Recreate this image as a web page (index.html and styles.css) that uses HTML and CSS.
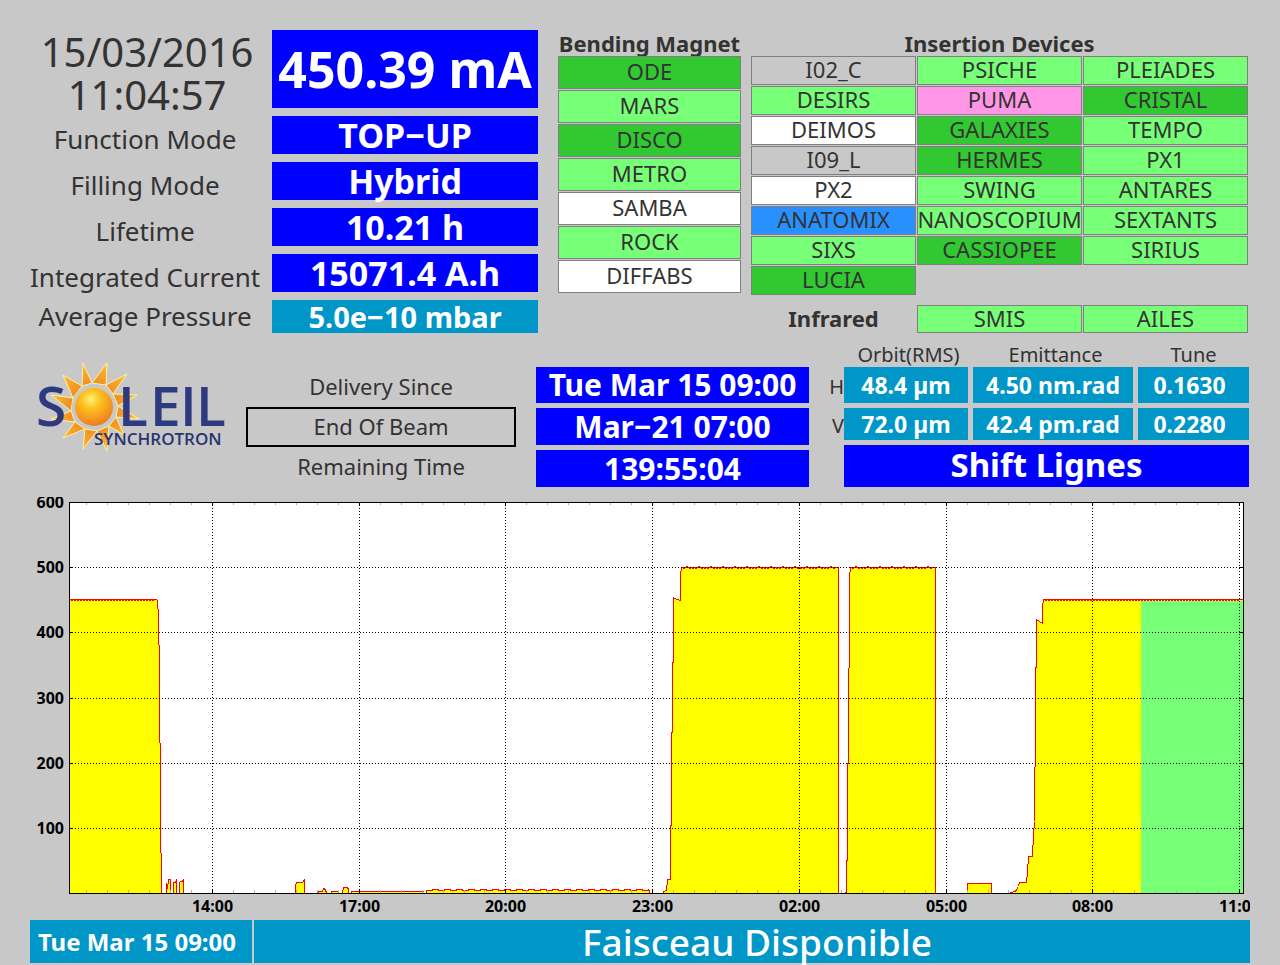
FILE: index.html
```html
<!DOCTYPE html>
<html lang="en">
<head>
    <meta charset="UTF-8">
    <meta name="viewport" content="width=device-width, initial-scale=1.0">
    <title>SOLEIL Machine Status</title>
    <link rel="stylesheet" href="styles.css">
</head>
<body>
<div class="top">
    <div class="machine">
        <div class="clock">15/03/2016<br>11:04:57</div>
        <div class="value current">450.39 mA</div>
        <div class="name">Function Mode</div>
        <div class="value">TOP−UP</div>
        <div class="name">Filling Mode</div>
        <div class="value">Hybrid</div>
        <div class="name">Lifetime</div>
        <div class="value">10.21 h</div>
        <div class="name">Integrated Current</div>
        <div class="value">15071.4 A.h</div>
        <div class="name pressure-name">Average Pressure</div>
        <div class="value pressure">5.0e−10 mbar</div>
    </div>

    <div class="bending">
        <h2>Bending Magnet</h2>
        <ul class="lines">
            <li class="dark">ODE</li>
            <li class="open">MARS</li>
            <li class="dark">DISCO</li>
            <li class="open">METRO</li>
            <li class="closed">SAMBA</li>
            <li class="open">ROCK</li>
            <li class="closed">DIFFABS</li>
        </ul>
    </div>

    <div class="insertion">
        <h2>Insertion Devices</h2>
        <ul class="lines three">
            <li>I02_C</li>
            <li class="open">PSICHE</li>
            <li class="open">PLEIADES</li>
            <li class="open">DESIRS</li>
            <li class="pink">PUMA</li>
            <li class="dark">CRISTAL</li>
            <li class="closed">DEIMOS</li>
            <li class="dark">GALAXIES</li>
            <li class="open">TEMPO</li>
            <li>I09_L</li>
            <li class="dark">HERMES</li>
            <li class="open">PX1</li>
            <li class="closed">PX2</li>
            <li class="open">SWING</li>
            <li class="open">ANTARES</li>
            <li class="blue">ANATOMIX</li>
            <li class="open">NANOSCOPIUM</li>
            <li class="open">SEXTANTS</li>
            <li class="open">SIXS</li>
            <li class="dark">CASSIOPEE</li>
            <li class="open">SIRIUS</li>
            <li class="dark">LUCIA</li>
        </ul>
        <div class="infrared">
            <h2>Infrared</h2>
            <ul class="lines two">
                <li class="open">SMIS</li>
                <li class="open">AILES</li>
            </ul>
        </div>
    </div>
</div>

<div class="middle">
    <svg class="logo" viewBox="0 0 196 96" role="img" aria-label="SOLEIL Synchrotron">
        <defs>
            <radialGradient id="sun" cx="42%" cy="30%" r="70%">
                <stop offset="0" stop-color="#fff27a"/>
                <stop offset="0.35" stop-color="#fdc21c"/>
                <stop offset="1" stop-color="#ee7d22"/>
            </radialGradient>
            <radialGradient id="ray" gradientUnits="userSpaceOnUse" cx="59" cy="49" r="46">
                <stop offset="0.45" stop-color="#f08a24"/>
                <stop offset="1" stop-color="#fcc030"/>
            </radialGradient>
        </defs>
        <g fill="url(#ray)" stroke="#fdf3a0" stroke-width="1">
            <path d="M47 28 48 5 57 25z"/>
            <path d="M57 25 72 5 71 27z"/>
            <path d="M71 27 92 16 78 36z"/>
            <path d="M78 36 102 37 83 48z"/>
            <path d="M83 48 104 61 81 59z"/>
            <path d="M81 59 89 77 74 68z"/>
            <path d="M74 68 72 93 62 73z"/>
            <path d="M62 73 48 91 50 71z"/>
            <path d="M50 71 28 80 40 64z"/>
            <path d="M40 64 16 61 36 53z"/>
            <path d="M36 53 16 37 38 40z"/>
            <path d="M38 40 28 17 47 28z"/>
        </g>
        <circle cx="59" cy="49" r="22" fill="#c8c8c8"/>
        <circle cx="59" cy="49" r="19" fill="url(#sun)"/>
        <text class="logo-name" x="1" y="68">S</text>
        <text class="logo-name" x="83 115 145 161" y="68">LEIL</text>
        <text class="logo-sub" x="59" y="87">SYNCHROTRON</text>
    </svg>

    <div class="delivery">
        <div>Delivery Since</div>
        <div class="boxed">End Of Beam</div>
        <div>Remaining Time</div>
    </div>

    <div class="times">
        <div class="value">Tue Mar 15 09:00</div>
        <div class="value">Mar−21 07:00</div>
        <div class="value">139:55:04</div>
    </div>

    <div class="beam">
        <table>
            <thead>
                <tr>
                    <td class="corner"></td>
                    <th scope="col" class="orbit">Orbit(RMS)</th>
                    <th scope="col" class="emittance">Emittance</th>
                    <th scope="col" class="tune">Tune</th>
                </tr>
            </thead>
            <tbody>
                <tr class="horizontal">
                    <th scope="row">H</th>
                    <td>48.4 µm</td>
                    <td>4.50 nm.rad</td>
                    <td>0.1630</td>
                </tr>
                <tr class="vertical">
                    <th scope="row">V</th>
                    <td>72.0 µm</td>
                    <td>42.4 pm.rad</td>
                    <td>0.2280</td>
                </tr>
            </tbody>
        </table>
        <div class="value shift">Shift Lignes</div>
    </div>
</div>

<svg class="chart" id="chart" viewBox="0 0 1220 423" role="img" aria-label="Beam current over the last 24 hours"></svg>

<div class="footer">
    <div class="message-date">Tue Mar 15 09:00</div>
    <div class="message">Faisceau Disponible</div>
</div>

<script src="chart.js"></script>
</body>
</html>
```

FILE: styles.css
```css
* {
    box-sizing: border-box;
    margin: 0;
    padding: 0;
}
body {
    font-family: "Noto Sans", "Open Sans", sans-serif;
    background-color: #c8c8c8;
    color: #333;
    padding: 30px 30px 2px;
}
ul {
    list-style: none;
}
h2 {
    font-size: 22px;
    font-weight: 700;
    line-height: 26px;
    text-align: center;
    white-space: nowrap;
}
.value {
    display: flex;
    align-items: center;
    justify-content: center;
    background-color: #0000ff;
    color: #fff;
    font-weight: 700;
    white-space: nowrap;
}
.top {
    display: grid;
    grid-template-columns: 518fr 183fr 497fr;
    column-gap: 10px;
    padding-right: 2px;
}

/* left block */
.machine {
    display: grid;
    grid-template-columns: 242fr 266fr;
    grid-template-rows: 78px repeat(4, 38px) 33px;
    row-gap: 8px;
    margin-right: 10px;
    font-size: 34px;
    line-height: 36px;
}
.clock {
    padding-right: 8px;
    font-size: 40px;
    line-height: 43px;
    text-align: center;
}
.current {
    font-size: 50px;
}
.name {
    padding: 5px 12px 0 0;
    font-size: 26px;
    text-align: center;
    white-space: nowrap;
}
.machine .pressure-name {
    padding-top: 0;
    line-height: 33px;
}
.pressure {
    background-color: #0096c8;
    font-size: 29px;
    line-height: 33px;
}

/* beamlines */
.lines {
    display: grid;
    grid-auto-rows: 33px;
    gap: 1px;
}
.lines li {
    display: flex;
    align-items: center;
    justify-content: center;
    border: 1px solid #808080;
    padding-bottom: 3px;
    font-size: 22px;
    line-height: 24px;
}
.lines.three {
    grid-template-columns: repeat(3, minmax(0, 1fr));
    grid-auto-rows: 29px;
}
.lines.two {
    grid-template-columns: repeat(2, 1fr);
    grid-auto-rows: 28px;
}
.lines .open {
    background-color: #78ff78;
}
.lines .dark {
    background-color: #32c832;
}
.lines .closed {
    background-color: #fff;
}
.lines .pink {
    background-color: #ff96e6;
}
.lines .blue {
    background-color: #2890ff;
}
.infrared {
    display: grid;
    grid-template-columns: 165fr 331fr;
    column-gap: 1px;
    margin-top: 10px;
}

/* middle band */
.middle {
    display: grid;
    grid-template-columns: 216fr 270fr 293fr 440fr;
    align-items: end;
    padding: 10px 1px 0 0;
}
.logo {
    width: 196px;
    height: 96px;
    margin: 0 0 33px 5px;
}
.logo-name {
    font-family: "Open Sans", sans-serif;
    font-size: 55px;
    font-weight: 600;
    fill: #2e3a80;
}
.logo-sub {
    font-family: "Open Sans", sans-serif;
    font-size: 17px;
    font-weight: 600;
    fill: #28346f;
}
.delivery {
    display: grid;
    grid-template-rows: repeat(3, 40px);
    font-size: 22px;
    line-height: 38px;
    text-align: center;
}
.boxed {
    border: 2px solid #000;
    line-height: 34px;
}
.times {
    display: grid;
    grid-template-rows: 36px 37px 37px;
    row-gap: 5px;
    padding-left: 20px;
    font-size: 30px;
    line-height: 36px;
}
.beam {
    padding-left: 20px;
}
.beam table {
    width: 100%;
    table-layout: fixed;
    border-collapse: separate;
    border-spacing: 0;
}
.beam th {
    font-size: 20px;
    font-weight: normal;
    line-height: 24px;
}
.beam tbody th {
    text-align: right;
    padding-bottom: 2px;
}
.corner {
    width: 15px;
}
.orbit {
    width: 129px;
}
.emittance {
    width: 165px;
}
.beam tbody td {
    border: solid #c8c8c8;
    border-width: 0 5px 5px 0;
    background-color: #0096c8;
    color: #fff;
    font-size: 23px;
    font-weight: 700;
    line-height: 30px;
    text-align: center;
    white-space: nowrap;
}
.beam tbody td:last-child {
    border-right: 0;
    padding-right: 8px;
}
.horizontal {
    height: 41px;
}
.vertical {
    height: 37px;
}
.shift {
    height: 42px;
    margin-left: 15px;
    padding-bottom: 2px;
    font-size: 33px;
    line-height: 40px;
}

/* current history */
.chart {
    display: block;
    width: 100%;
    margin-top: 10px;
    font-size: 16px;
    font-weight: 700;
}
.chart path,
.chart rect {
    shape-rendering: crispEdges;
}
.plot {
    fill: #fff;
}
.past {
    fill: #ffff00;
}
.delivered {
    fill: #78ff78;
}
.trace {
    fill: none;
    stroke: #ff0000;
}
.grid {
    fill: none;
    stroke: #000;
    stroke-dasharray: 1 2;
}
.axis {
    fill: none;
    stroke: #000;
}
.minor {
    fill: none;
    stroke: #b0b0b0;
}

.footer {
    display: grid;
    grid-template-columns: 222fr 996fr;
    column-gap: 2px;
    color: #fff;
    line-height: 43px;
    text-align: center;
    white-space: nowrap;
}
.footer div {
    background-color: #0096c8;
}
.message-date {
    padding-right: 8px;
    font-size: 24px;
    font-weight: 700;
}
.message {
    padding-left: 10px;
    font-size: 37px;
    font-weight: 500;
}
```

FILE: chart.js
```js
const chart = document.getElementById('chart');
const left = 39, right = 1213, top0 = 5, bottom = 396;
const deliveryStart = 1111;

// [x, mA] for each stretch of stored beam
const runs = [
    [[39, 451], [126, 451], [127, 449], [128, 424], [129, 340], [130, 127], [131, 0]],
    [[136, 0], [136, 15], [137, 8], [138, 20], [138, 22], [140, 22], [140, 0]],
    [[143, 0], [143, 17], [145, 17], [146, 22], [146, 0]],
    [[149, 0], [149, 17], [150, 19], [152, 19], [153, 22], [153, 0]],
    [[265, 0], [265, 12], [266, 17], [272, 17], [274, 21], [274, 0]],
    [[287, 0], [288, 3], [292, 3], [293, 8], [295, 6], [296, 0]],
    [[301, 0], [301, 3], [308, 3], [308, 0]],
    [[312, 0], [313, 9], [317, 9], [318, 6], [318, 0]],
    [[321, 0], [321, 3], [393, 3]],
    [[396, 0], [396, 5], [619, 5], [619, 0]],
    [[633, 0], [633, 3], [636, 5], [637, 22], [640, 22], [640, 104], [641, 104], [641, 247], [642, 247], [643, 454], [644, 452], [650, 449], [650, 488], [651, 500], [808, 500], [808, 0]],
    [[815, 0], [816, 3], [816, 50], [817, 50], [817, 200], [818, 200], [819, 485], [820, 500], [905, 500], [905, 0]],
    [[937, 0], [937, 15], [961, 15], [961, 0]],
    [[980, 1], [985, 3], [988, 10], [989, 17], [996, 17], [997, 34], [998, 57], [1002, 57], [1003, 90], [1004, 110], [1005, 270], [1006, 421], [1012, 415], [1012, 440], [1013, 451], [1213, 451]]
];

function y(mA) {
    return Math.round(bottom - mA * 391 / 600) + 0.5;
}

function add(tag, attrs, text) {
    const el = document.createElementNS('http://www.w3.org/2000/svg', tag);
    for (const key in attrs) {
        el.setAttribute(key, attrs[key]);
    }
    if (text) {
        el.textContent = text;
    }
    chart.appendChild(el);
}

// top-up injections show as a small ripple on long flat parts
function trace(run) {
    let d = `M${run[0][0] + 0.5} ${y(run[0][1])}`;
    for (let i = 1; i < run.length; i++) {
        const [x0, a] = run[i - 1];
        const [x1, b] = run[i];
        if (a === b && a > 400) {
            for (let x = x0 + 2, n = 0; x < x1 - 3; x += 3, n++) {
                const step = a === 500 && n % 4 === 1 ? -1 : 1;
                d += `H${x + 0.5}V${y(a) + step}H${x + 1.5}V${y(a)}`;
            }
        } else if (a === 5 && b === 5) {
            for (let x = x0 + 6, up = 1; x < x1; x += 6, up = 1 - up) {
                d += `H${x + 0.5}V${y(a) - up}`;
            }
        }
        d += `L${x1 + 0.5} ${y(b)}`;
    }
    return d;
}

add('rect', { class: 'plot', x: left, y: top0, width: right - left, height: bottom - top0 });

runs.forEach(run => {
    const end = run[run.length - 1][0];
    add('path', { class: 'past', d: `${trace(run)}V${bottom}H${run[0][0]}z` });
    if (end > deliveryStart) {
        add('rect', { class: 'delivered', x: deliveryStart, y: y(450) + 0.5, width: end - deliveryStart, height: bottom - y(450) });
    }
    add('path', { class: 'trace', d: trace(run) });
});

let major = '', minor = '', grid = '';
const hours = ['14:00', '17:00', '20:00', '23:00', '02:00', '05:00', '08:00', '11:00'];
for (let i = -6; i < 50; i++) {
    const x = Math.round(182 + i * 20.96) + 0.5;
    if (i % 7 === 0) {
        major += `M${x} ${top0}v4M${x} ${bottom}v-4`;
        grid += `M${x} ${top0}V${bottom}`;
        add('text', { x: x, y: 415, 'text-anchor': 'middle' }, hours[i / 7]);
    } else {
        minor += `M${x} ${top0}v3M${x} ${bottom}v-3`;
    }
}
for (let mA = 100; mA <= 600; mA += 100) {
    if (mA < 600) {
        major += `M${left} ${y(mA)}h4M${right} ${y(mA)}h-4`;
        grid += `M${left} ${y(mA)}H${right}`;
    }
    add('text', { x: 34, y: y(mA) + 5, 'text-anchor': 'end' }, String(mA));
}
add('path', { class: 'minor', d: minor });
add('path', { class: 'grid', d: grid });
add('path', { class: 'axis', d: `${major}M${left + 0.5} ${top0 + 0.5}H${right + 0.5}V${bottom + 0.5}H${left + 0.5}z` });
```
